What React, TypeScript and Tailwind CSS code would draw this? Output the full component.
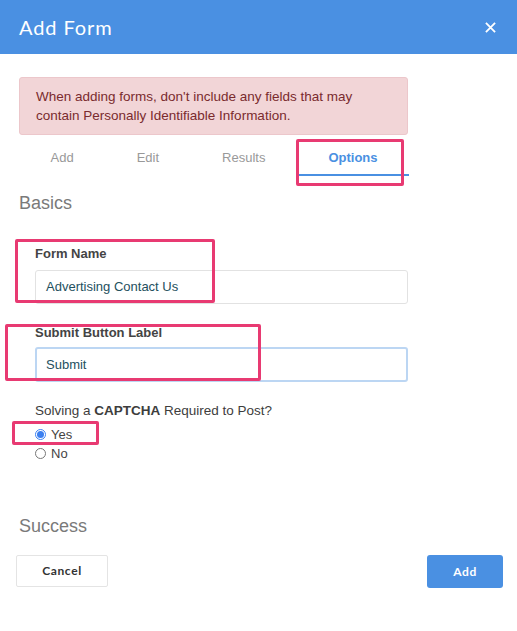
import React from "react"

const tabs = [
  { label: "Add", active: false },
  { label: "Edit", active: false },
  { label: "Results", active: false },
  { label: "Options", active: true },
]

export default function App() {
  return (
    <div className="relative w-[517px] h-[631px] bg-white overflow-hidden font-['Liberation_Sans',Arial,sans-serif]">
      {/* Header */}
      <div className="h-[54px] bg-[#4a90e2] flex items-center justify-between pl-[19px] pr-[21px]">
        <h1 className="text-[20px] text-white font-['Lato',sans-serif] tracking-[0.9px]">Add Form</h1>
        <svg className="w-[11px] h-[11px] text-white" viewBox="0 0 12 12" fill="none" stroke="currentColor" strokeWidth={2}>
          <path d="M1 1l10 10M11 1L1 11" />
        </svg>
      </div>

      <div className="pl-[19px] pr-[14px] pt-[23px]">
        {/* Alert */}
        <div className="w-[389px] h-[58px] bg-[#f2d5d7] border border-[#ecc7cb] rounded-[3px] px-[16px] pt-[9px] text-[13.5px] leading-[19px] text-[#7a2b2e]">
          When adding forms, don't include any fields that may contain Personally Identifiable Information.
        </div>

        {/* Tabs */}
        <div className="flex w-[389px] h-[37px] mt-[4px]">
          {tabs.map((t) => (
            <div
              key={t.label}
              className={
                t.active
                  ? "px-[31.5px] pt-[9px] text-[13px] leading-[19px] font-bold text-[#4a90e2] border-b-2 border-[#4a90e2]"
                  : "px-[31.5px] pt-[9px] text-[13px] leading-[19px] text-[#999]"
              }
            >
              {t.label}
            </div>
          ))}
        </div>

        <h2 className="mt-[15px] text-[18px] leading-[24px] text-[#7a7a7a]">Basics</h2>

        <div className="pl-[16px] w-[389px]">
          <div className="mt-[30px] text-[13px] leading-[18px] font-bold text-[#444]">Form Name</div>
          <div className="mt-[7px] h-[34px] border border-[#e2e2e2] rounded-[3px] flex items-center px-[10px] text-[13px] text-[#24505e]">
            Advertising Contact Us
          </div>

          <div className="mt-[20px] text-[13px] leading-[18px] font-bold text-[#444]">Submit Button Label</div>
          <div className="mt-[5px] h-[35px] border-2 border-[#bcd6f3] rounded-[3px] flex items-center px-[9px] text-[13px] text-[#24505e]">
            Submit
          </div>

          <div className="mt-[20px] text-[13.5px] leading-[18px] text-[#3d3d3d]">
            Solving a <span className="font-bold">CAPTCHA</span> Required to Post?
          </div>
          <div className="mt-[5px] flex items-center gap-[5px] text-[13px] leading-[19px] text-[#444]">
            <span className="w-[11px] h-[11px] rounded-full border border-[#3b82f6] flex items-center justify-center">
              <span className="w-[7px] h-[7px] rounded-full bg-[#3b7ff0]" />
            </span>
            Yes
          </div>
          <div className="flex items-center gap-[5px] text-[13px] leading-[19px] text-[#444]">
            <span className="w-[11px] h-[11px] rounded-full border border-[#777]" />
            No
          </div>
        </div>

        <h2 className="mt-[51px] text-[18px] leading-[24px] text-[#7a7a7a]">Success</h2>
      </div>

      {/* Footer buttons */}
      <div className="flex justify-between pl-[16px] pr-[14px] mt-[17px]">
        <button className="w-[92px] h-[32px] border border-[#e4e4e4] rounded-[2px] bg-white text-[12px] font-bold text-[#333] tracking-[0.6px] font-['Lato',sans-serif]">
          Cancel
        </button>
        <button className="w-[76px] h-[33px] rounded-[3px] bg-[#4a90e2] text-[12px] font-bold text-white tracking-[0.6px] font-['Lato',sans-serif]">
          Add
        </button>
      </div>

      {/* Pink annotation boxes */}
      <div className="absolute left-[296px] top-[139px] w-[108px] h-[47px] border-[3px] border-[#e83a72] rounded-[2px]" />
      <div className="absolute left-[15px] top-[239px] w-[200px] h-[64px] border-[3px] border-[#e83a72] rounded-[2px]" />
      <div className="absolute left-[5px] top-[324px] w-[256px] h-[57px] border-[3px] border-[#e83a72] rounded-[2px]" />
      <div className="absolute left-[12px] top-[421px] w-[87px] h-[24px] border-[3px] border-[#e83a72] rounded-[2px]" />
    </div>
  )
}
